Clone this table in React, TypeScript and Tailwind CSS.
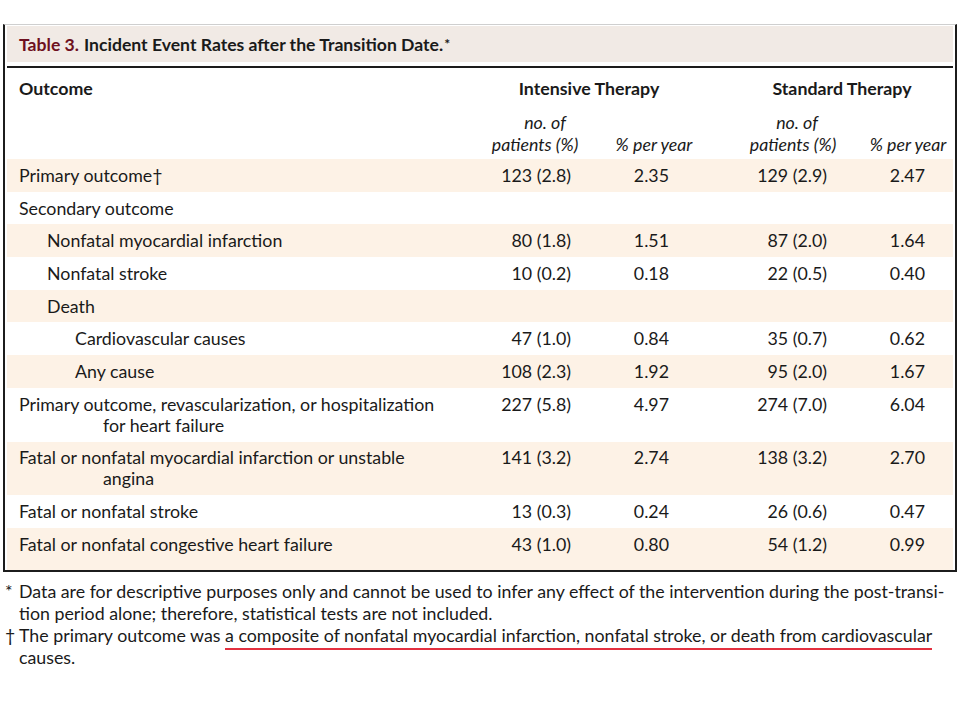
const rows: { label: string; cont?: string; indent: number; vals?: [string, string, string, string]; shade: boolean }[] = [
  { label: 'Primary outcome†', indent: 0, vals: ['123 (2.8)', '2.35', '129 (2.9)', '2.47'], shade: true },
  { label: 'Secondary outcome', indent: 0, shade: false },
  { label: 'Nonfatal myocardial infarction', indent: 1, vals: ['80 (1.8)', '1.51', '87 (2.0)', '1.64'], shade: true },
  { label: 'Nonfatal stroke', indent: 1, vals: ['10 (0.2)', '0.18', '22 (0.5)', '0.40'], shade: false },
  { label: 'Death', indent: 1, shade: true },
  { label: 'Cardiovascular causes', indent: 2, vals: ['47 (1.0)', '0.84', '35 (0.7)', '0.62'], shade: false },
  { label: 'Any cause', indent: 2, vals: ['108 (2.3)', '1.92', '95 (2.0)', '1.67'], shade: true },
  {
    label: 'Primary outcome, revascularization, or hospitalization',
    cont: 'for heart failure',
    indent: 0,
    vals: ['227 (5.8)', '4.97', '274 (7.0)', '6.04'],
    shade: false,
  },
  {
    label: 'Fatal or nonfatal myocardial infarction or unstable',
    cont: 'angina',
    indent: 0,
    vals: ['141 (3.2)', '2.74', '138 (3.2)', '2.70'],
    shade: true,
  },
  { label: 'Fatal or nonfatal stroke', indent: 0, vals: ['13 (0.3)', '0.24', '26 (0.6)', '0.47'], shade: false },
  { label: 'Fatal or nonfatal congestive heart failure', indent: 0, vals: ['43 (1.0)', '0.80', '54 (1.2)', '0.99'], shade: true },
];

const gridCols = 'grid grid-cols-[463px_130px_108px_170px_60px_15px]';
const indentClass = ['pl-[12px]', 'pl-[40px]', 'pl-[68px]'];

export default function App() {
  return (
    <div className="w-[960px] h-[720px] bg-white text-[#1a1a1a] text-[17.8px] leading-[21px]" style={{ fontFamily: 'Lato, "Open Sans", sans-serif' }}>
      <div className="h-[24px]" />
      <div className="ml-[3px] w-[954px] border-t border-t-[#cfcfcf] border-x-2 border-b-2 border-x-[#1c1c1c] border-b-[#1c1c1c] px-[2px] pt-[1px]">
        {/* title bar */}
        <div className="h-[36px] bg-[#f1eae5] flex items-center pl-[12px] font-bold text-[17.6px]">
          <span className="text-[#6e1020]">Table 3.</span>
          <span className="ml-[5px]">Incident Event Rates after the Transition Date.</span>
          <span className="text-[14px] self-start mt-[7px] ml-[1px]">*</span>
        </div>
        <div className="mt-[4px] h-[2px] bg-[#1c1c1c]" />

        {/* column headers */}
        <div className={`${gridCols} pt-[10px] pb-[4px]`}>
          <div className="pl-[12px] font-bold">Outcome</div>
          <div className="col-span-2 text-center font-bold">Intensive Therapy</div>
          <div className="col-span-2 text-center font-bold pl-[38px]">Standard Therapy</div>
          <div />
          <div className="col-start-2 mt-[12px] text-center italic leading-[22px]">
            <div className="pl-[20px]">no. of</div>
            <div>patients (%)</div>
          </div>
          <div className="mt-[12px] italic leading-[22px] text-center flex items-end">
            <span className="w-full">% per year</span>
          </div>
          <div className="mt-[12px] text-center italic leading-[22px]">
            <div className="pl-[8px]">no. of</div>
            <div>patients (%)</div>
          </div>
          <div className="mt-[12px] italic leading-[22px] flex items-end justify-center whitespace-nowrap">
            <span>% per year</span>
          </div>
        </div>

        {/* body */}
        {rows.map((r, i) => (
          <div
            key={i}
            className={`${gridCols} py-[5.85px] ${r.shade ? 'bg-[#fdf2e6]' : 'bg-white'} ${i === rows.length - 1 ? 'pb-[15.5px]' : ''}`}
          >
            <div className={`${indentClass[r.indent]} whitespace-nowrap`}>
              <div>{r.label}</div>
              {r.cont && <div className="pl-[84px]">{r.cont}</div>}
            </div>
            <div className="text-right pr-[29px]">{r.vals?.[0]}</div>
            <div className="text-right pr-[39px]">{r.vals?.[1]}</div>
            <div className="text-right pr-[51px]">{r.vals?.[2]}</div>
            <div className="text-right pr-[13px]">{r.vals?.[3]}</div>
            <div />
          </div>
        ))}
      </div>

      {/* footnotes */}
      <div className="mt-[8px] pl-[5px] leading-[22px] whitespace-nowrap">
        <div className="flex">
          <span className="w-[14px]">*</span>
          <div>
            Data are for descriptive purposes only and cannot be used to infer any effect of the intervention during the post-transi-
            <br />
            tion period alone; therefore, statistical tests are not included.
          </div>
        </div>
        <div className="flex">
          <span className="w-[14px]">†</span>
          <div>
            The primary outcome was{' '}
            <span className="border-b-2 border-b-[#e2303f] pb-[2px]">
              a composite of nonfatal myocardial infarction, nonfatal stroke, or death from cardiovascular
            </span>
            <br />
            causes.
          </div>
        </div>
      </div>
    </div>
  );
}
